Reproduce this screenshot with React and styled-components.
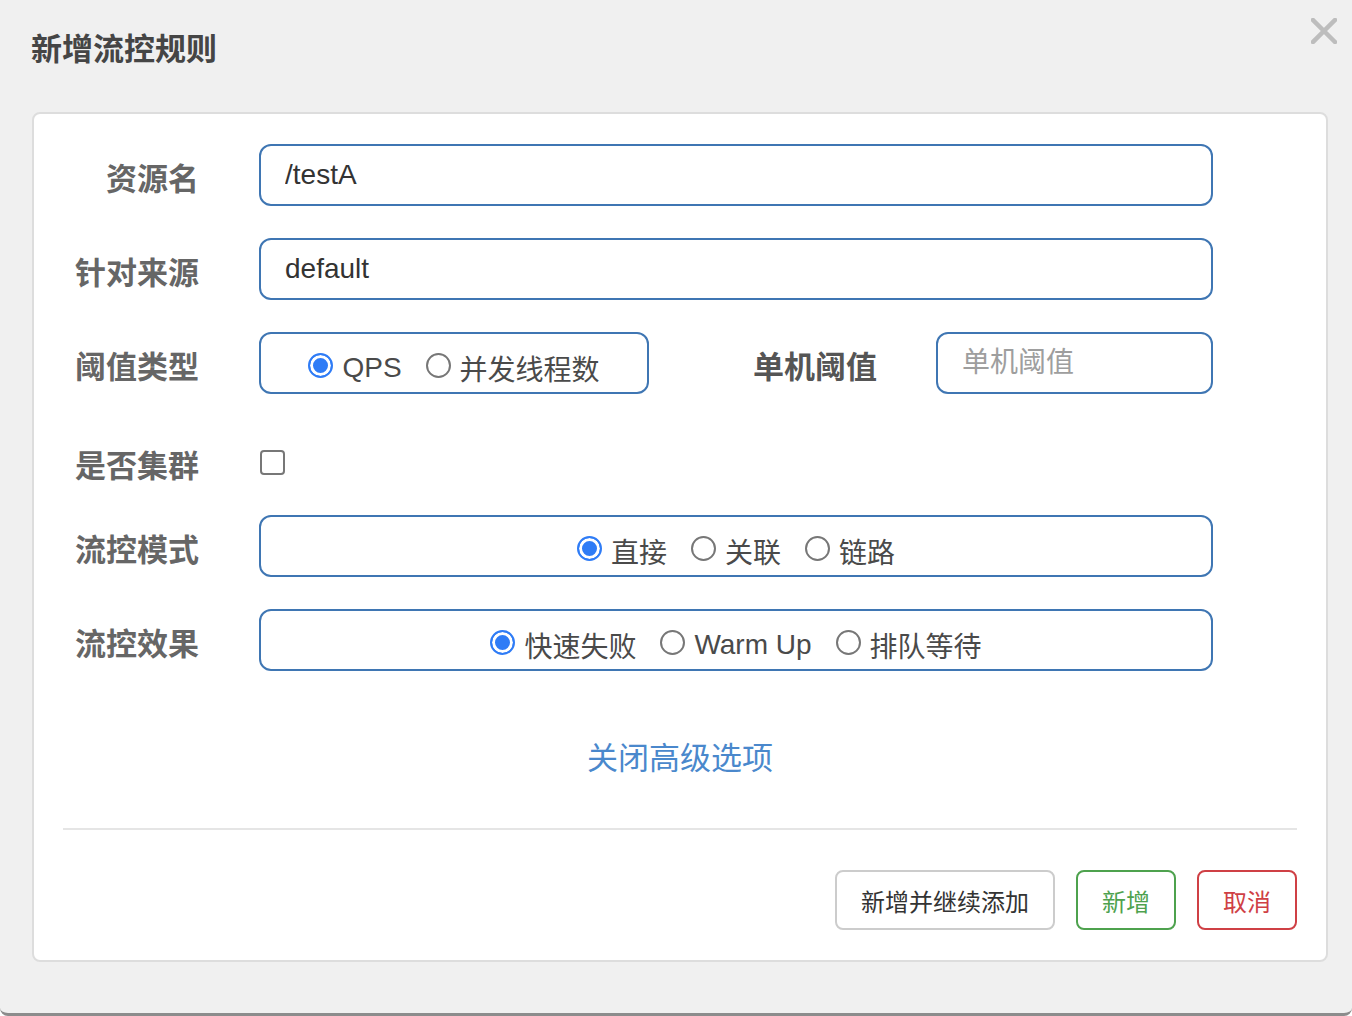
import React from 'react';
import styled, { createGlobalStyle } from 'styled-components';

const GlobalStyle = createGlobalStyle`
	html, body {
		margin: 0;
		padding: 0;
		background: #ffffff;
	}
	body {
		font-family: "Liberation Sans", "Noto Sans CJK SC", sans-serif;
	}
	* { box-sizing: border-box; }
`;

function Radio ({ checked, children }) {
	return (
		<RadioItem>
			<RadioDot checked={checked} />
			<span>{children}</span>
		</RadioItem>
	);
}

function App () {
	return (
		<Page>
			<GlobalStyle />
			<Header>
				<Title>新增流控规则</Title>
				<Close aria-label="close">
					<svg width="26" height="26" viewBox="0 0 26 26">
						<path d="M2 2 L24 24 M24 2 L2 24" stroke="#bdbdbd" strokeWidth="4.5" strokeLinecap="square" />
					</svg>
				</Close>
			</Header>
			<Panel>
				<Form>
					<Row>
						<Label>资源名</Label>
						<Input defaultValue="/testA" />
					</Row>
					<Row>
						<Label>针对来源</Label>
						<Input defaultValue="default" />
					</Row>
					<Row>
						<Label>阈值类型</Label>
						<RadioBox width="390px">
							<Radio checked>QPS</Radio>
							<Radio>并发线程数</Radio>
						</RadioBox>
						<InlineLabel>单机阈值</InlineLabel>
						<Input placeholder="单机阈值" />
					</Row>
					<Row compact>
						<Label>是否集群</Label>
						<Checkbox />
					</Row>
					<Row>
						<Label>流控模式</Label>
						<RadioBox>
							<Radio checked>直接</Radio>
							<Radio>关联</Radio>
							<Radio>链路</Radio>
						</RadioBox>
					</Row>
					<Row>
						<Label>流控效果</Label>
						<RadioBox>
							<Radio checked>快速失败</Radio>
							<Radio>Warm Up</Radio>
							<Radio>排队等待</Radio>
						</RadioBox>
					</Row>
				</Form>
				<LinkRow>
					<Link>关闭高级选项</Link>
				</LinkRow>
				<Divider />
				<Footer>
					<Button>新增并继续添加</Button>
					<Button variant="success">新增</Button>
					<Button variant="danger">取消</Button>
				</Footer>
			</Panel>
		</Page>
	);
}

const Page = styled.div`
	width: 1352px;
	height: 1016px;
	background: #f0f0f0;
	border-bottom: 3px solid #8c8c8c;
	border-radius: 0 0 8px 8px;
	display: flex;
	flex-direction: column;
`;

const Header = styled.div`
	height: 96px;
	padding: 0 15px 0 31px;
	display: flex;
	align-items: center;
	justify-content: space-between;
`;

const Title = styled.h1`
	margin: 0 0 4px 0;
	font-family: "Noto Sans CJK SC", sans-serif;
	font-size: 31px;
	font-weight: 700;
	color: #454545;
	line-height: 1;
`;

const Close = styled.button`
	align-self: flex-start;
	margin-top: 18px;
	padding: 0;
	border: none;
	background: transparent;
	width: 26px;
	height: 26px;
	display: flex;
	cursor: pointer;
`;

const Panel = styled.div`
	margin: 16px 24px 0 32px;
	background: #ffffff;
	border: 2px solid #dddddd;
	border-radius: 8px;
	padding: 30px 0 30px 0;
	display: flex;
	flex-direction: column;
`;

const Form = styled.div`
	display: flex;
	flex-direction: column;
	gap: 32px;
	padding-right: 113px;
`;

const Row = styled.div`
	display: flex;
	align-items: center;
	height: ${p => (p.compact ? '52px' : '62px')};
	margin-top: ${p => (p.compact ? '10px' : '0')};
	margin-bottom: ${p => (p.compact ? '-5px' : '0')};
`;

const Label = styled.label`
	width: 165px;
	margin-right: 60px;
	padding-top: 3px;
	text-align: right;
	font-family: "Noto Sans CJK SC", sans-serif;
	font-size: 31px;
	font-weight: 700;
	color: #666666;
	white-space: nowrap;
`;

const InlineLabel = styled(Label)`
	width: auto;
	margin: 0 59px 0 104px;
	color: #555555;
`;

const Input = styled.input`
	flex: 1;
	min-width: 0;
	height: 62px;
	border: 2px solid #3f76b3;
	border-radius: 12px;
	padding: 0 24px;
	font-family: "Liberation Sans", "Noto Sans CJK SC", sans-serif;
	font-size: 28px;
	color: #333333;
	outline: none;
	background: #ffffff;

	&::placeholder {
		color: #9e9e9e;
	}
`;

const RadioBox = styled.div`
	flex: ${p => (p.width ? '0 0 auto' : '1')};
	width: ${p => p.width || 'auto'};
	height: 62px;
	border: 2px solid #3f76b3;
	border-radius: 12px;
	display: flex;
	align-items: center;
	justify-content: center;
	gap: 24px;
	padding-top: 9px;
`;

const RadioItem = styled.span`
	display: inline-flex;
	align-items: center;
	gap: 9px;
	font-family: "Liberation Sans", "Noto Sans CJK SC", sans-serif;
	font-size: 28px;
	color: #4a4a4a;
	white-space: nowrap;
`;

const RadioDot = styled.span`
	width: 25px;
	height: 25px;
	border-radius: 50%;
	flex: 0 0 auto;
	margin-top: -4px;
	border: ${p => (p.checked ? '2px solid #2f7cf6' : '2px solid #777777')};
	background: ${p => (p.checked ? '#2f7cf6' : '#ffffff')};
	box-shadow: ${p => (p.checked ? 'inset 0 0 0 3px #ffffff' : 'none')};
`;

const Checkbox = styled.span`
	width: 25px;
	height: 25px;
	border: 2px solid #777777;
	border-radius: 4px;
	background: #ffffff;
	margin-left: 1px;
`;

const LinkRow = styled.div`
	margin-top: 62px;
	height: 44px;
	display: flex;
	align-items: center;
	justify-content: center;
`;

const Link = styled.a`
	font-family: "Noto Sans CJK SC", sans-serif;
	font-size: 31px;
	color: #4a88cc;
	cursor: pointer;
`;

const Divider = styled.hr`
	margin: 51px 29px 0 29px;
	border: none;
	height: 2px;
	background: #e5e5e5;
`;

const Footer = styled.div`
	margin-top: 40px;
	padding-right: 29px;
	display: flex;
	justify-content: flex-end;
	gap: 21px;
`;

const tones = {
	default: { border: '#cccccc', color: '#333333' },
	success: { border: '#4ea24e', color: '#4ea24e' },
	danger: { border: '#cf4045', color: '#cf4045' },
};

const Button = styled.button`
	height: 60px;
	padding: 0 24px;
	background: #ffffff;
	border: 2px solid ${p => tones[p.variant || 'default'].border};
	color: ${p => tones[p.variant || 'default'].color};
	border-radius: 8px;
	font-family: "Noto Sans CJK SC", sans-serif;
	font-size: 24px;
	cursor: pointer;
`;

export default App;
